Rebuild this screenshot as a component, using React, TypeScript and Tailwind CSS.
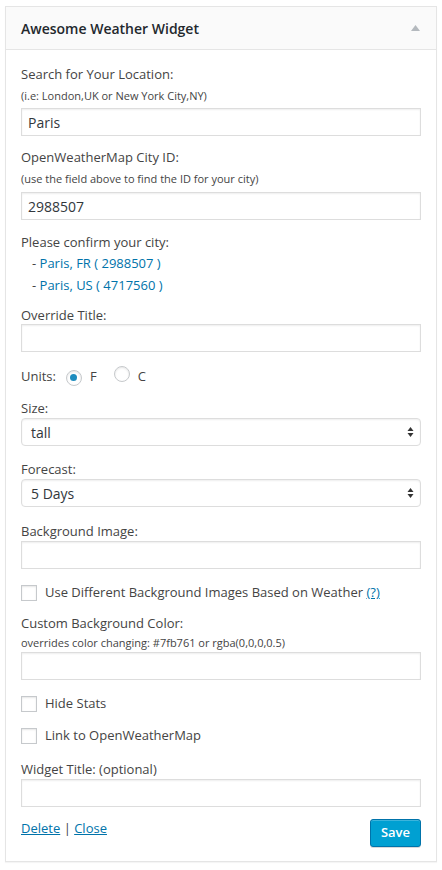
import React from 'react';

const font = { fontFamily: '"Open Sans", "Liberation Sans", sans-serif' };

const Label: React.FC<{ className?: string; children: React.ReactNode }> = ({ className = '', children }) => (
  <div className={`text-[13px] leading-[18px] text-[#444] ${className}`}>{children}</div>
);

const Hint: React.FC<{ className?: string; children: React.ReactNode }> = ({ className = '', children }) => (
  <div className={`text-[11px] leading-[16px] text-[#444] ${className}`}>{children}</div>
);

const TextInput: React.FC<{ className?: string; value?: string }> = ({ className = '', value = '' }) => (
  <input
    readOnly
    value={value}
    className={`block w-full h-[28px] border border-[#ddd] bg-white px-[6px] text-[14px] text-[#32373c] shadow-[inset_0_1px_2px_rgba(0,0,0,0.07)] outline-none ${className}`}
    style={font}
  />
);

const Select: React.FC<{ className?: string; value: string }> = ({ className = '', value }) => (
  <div
    className={`flex items-center justify-between h-[28px] rounded-[4px] border border-[#ddd] bg-white pl-[9px] pr-[6px] text-[14px] text-[#32373c] shadow-[inset_0_1px_2px_rgba(0,0,0,0.07)] ${className}`}
  >
    <span>{value}</span>
    <svg width="7" height="12" viewBox="0 0 7 12">
      <path d="M3.5 1 L6.5 5 L0.5 5 Z" fill="#333" />
      <path d="M3.5 11 L6.5 7 L0.5 7 Z" fill="#333" />
    </svg>
  </div>
);

const Checkbox: React.FC = () => (
  <span className="inline-block w-[16px] h-[16px] border border-[#c6c9cc] bg-white shadow-[inset_0_1px_2px_rgba(0,0,0,0.1)]" />
);

const Radio: React.FC<{ checked?: boolean }> = ({ checked }) => (
  <span className="inline-flex items-center justify-center w-[16px] h-[16px] rounded-full border border-[#c6c9cc] bg-white shadow-[inset_0_1px_2px_rgba(0,0,0,0.1)]">
    {checked && <span className="block w-[7px] h-[7px] rounded-full bg-[#1e8cbe]" />}
  </span>
);

const CheckRow: React.FC<{ className?: string; children: React.ReactNode }> = ({ className = '', children }) => (
  <div className={`flex items-center h-[18px] text-[13px] text-[#444] ${className}`}>
    <Checkbox />
    <span className="ml-[8px]">{children}</span>
  </div>
);

export default function App() {
  return (
    <div className="min-h-screen bg-white pt-[6px] px-[5px]" style={font}>
      <div className="w-[432px] border border-[#e5e5e5] bg-white shadow-[0_1px_1px_rgba(0,0,0,0.04)]">
        <div className="flex items-center justify-between h-[43px] border-b border-[#e5e5e5] bg-[#fafafa] pl-[15px] pr-[16px]">
          <h3 className="text-[14px] font-semibold text-[#23282d]">Awesome Weather Widget</h3>
          <svg width="9" height="6" viewBox="0 0 9 6">
            <path d="M4.5 0 L9 6 L0 6 Z" fill="#b4b9be" />
          </svg>
        </div>

        <div className="px-[15px] pt-[15px] pb-[14px]">
          <Label>Search for Your Location:</Label>
          <Hint className="mt-[5px]">(i.e: London,UK or New York City,NY)</Hint>
          <TextInput className="mt-[4px]" value="Paris" />

          <Label className="mt-[12px]">OpenWeatherMap City ID:</Label>
          <Hint className="mt-[5px]">(use the field above to find the ID for your city)</Hint>
          <TextInput className="mt-[5px]" value="2988507" />

          <Label className="mt-[13px]">Please confirm your city:</Label>
          <div className="mt-[1px] pl-[11px] text-[13px] leading-[22px] text-[#444]">
            <div>
              - <a className="text-[#0073aa]">Paris, FR ( 2988507 )</a>
            </div>
            <div>
              - <a className="text-[#0073aa]">Paris, US ( 4717560 )</a>
            </div>
          </div>

          <Label className="mt-[10px]">Override Title:</Label>
          <TextInput />

          <div className="mt-[16px] flex items-center h-[18px] text-[13px] text-[#444]">
            <span>Units:</span>
            <span className="ml-[10px]"><Radio checked /></span>
            <span className="ml-[8px]">F</span>
            <span className="ml-[17px]"><Radio /></span>
            <span className="ml-[8px]">C</span>
          </div>

          <Label className="mt-[13px]">Size:</Label>
          <Select className="mt-[1px]" value="tall" />

          <Label className="mt-[14px]">Forecast:</Label>
          <Select className="mt-[1px]" value="5 Days" />

          <Label className="mt-[15px]">Background Image:</Label>
          <TextInput className="mt-[1px]" />

          <CheckRow className="mt-[15px]">
            Use Different Background Images Based on Weather{' '}
            <a className="text-[#0073aa] underline">(?)</a>
          </CheckRow>

          <Label className="mt-[12px]">Custom Background Color:</Label>
          <Hint className="mt-[3px]">overrides color changing: #7fb761 or rgba(0,0,0,0.5)</Hint>
          <TextInput className="mt-[1px]" />

          <CheckRow className="mt-[15px]">Hide Stats</CheckRow>
          <CheckRow className="mt-[14px]">Link to OpenWeatherMap</CheckRow>

          <Label className="mt-[15px]">Widget Title: (optional)</Label>
          <TextInput className="mt-[1px]" />

          <div className="mt-[12px] flex items-start justify-between">
            <div className="text-[13px] leading-[18px] text-[#444]">
              <a className="text-[#0073aa] underline">Delete</a> | <a className="text-[#0073aa] underline">Close</a>
            </div>
            <button className="h-[28px] px-[10px] rounded-[3px] border border-[#0073aa] bg-[#00a0d2] text-[13px] font-semibold text-white shadow-[inset_0_1px_0_rgba(120,200,230,0.5),0_1px_0_rgba(0,0,0,0.15)]">
              Save
            </button>
          </div>
        </div>
      </div>
    </div>
  );
}
